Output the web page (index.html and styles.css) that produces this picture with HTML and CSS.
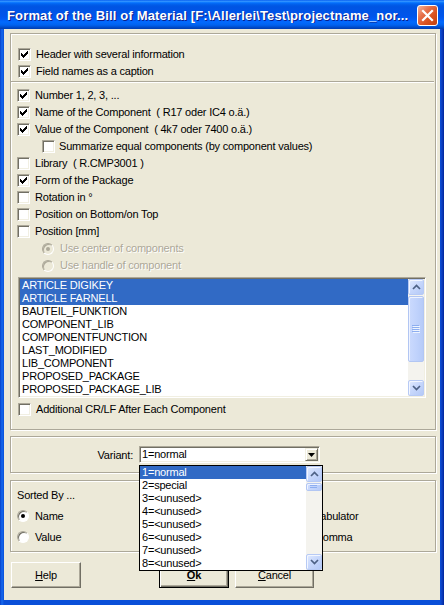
FILE: index.html
```html
<!DOCTYPE html>
<html>
<head>
<meta charset="utf-8">
<title>Format of the Bill of Material</title>
<link rel="stylesheet" href="styles.css">
</head>
<body>
<div class="window">
  <div class="titlebar">
    <span class="title">Format of the Bill of Material [F:\Allerlei\Test\projectname_nor...</span>
    <span class="close"><svg width="19" height="19" viewBox="0 0 19 19"><path d="M5 5 L14 14 M14 5 L5 14" stroke="#fff" stroke-width="2.2" stroke-linecap="square"/></svg></span>
  </div>
  <div class="client">
    <div class="group g1">
      <div class="sec-head">
        <div class="row"><span class="cb"><svg class="chk" width="11" height="11" viewBox="0 0 11 11"><path d="M2 4h1v3H2z M3 5h1v3H3z M4 6h1v3H4z M5 5h1v3H5z M6 4h1v3H6z M7 3h1v3H7z M8 2h1v3H8z"/></svg></span><span class="lbl">Header with several information</span></div>
        <div class="row"><span class="cb"><svg class="chk" width="11" height="11" viewBox="0 0 11 11"><path d="M2 4h1v3H2z M3 5h1v3H3z M4 6h1v3H4z M5 5h1v3H5z M6 4h1v3H6z M7 3h1v3H7z M8 2h1v3H8z"/></svg></span><span class="lbl">Field names as a caption</span></div>
      </div>
      <div class="sep"></div>
      <div class="sec-main">
        <div class="row"><span class="cb"><svg class="chk" width="11" height="11" viewBox="0 0 11 11"><path d="M2 4h1v3H2z M3 5h1v3H3z M4 6h1v3H4z M5 5h1v3H5z M6 4h1v3H6z M7 3h1v3H7z M8 2h1v3H8z"/></svg></span><span class="lbl">Number 1, 2, 3, ...</span></div>
        <div class="row"><span class="cb"><svg class="chk" width="11" height="11" viewBox="0 0 11 11"><path d="M2 4h1v3H2z M3 5h1v3H3z M4 6h1v3H4z M5 5h1v3H5z M6 4h1v3H6z M7 3h1v3H7z M8 2h1v3H8z"/></svg></span><span class="lbl">Name of the Component&nbsp; ( R17 oder IC4 o.ä.)</span></div>
        <div class="row"><span class="cb"><svg class="chk" width="11" height="11" viewBox="0 0 11 11"><path d="M2 4h1v3H2z M3 5h1v3H3z M4 6h1v3H4z M5 5h1v3H5z M6 4h1v3H6z M7 3h1v3H7z M8 2h1v3H8z"/></svg></span><span class="lbl">Value of the Component&nbsp; ( 4k7 oder 7400 o.ä.)</span></div>
        <div class="row sub"><span class="cb"></span><span class="lbl">Summarize equal components (by component values)</span></div>
        <div class="row"><span class="cb"></span><span class="lbl">Library&nbsp; ( R.CMP3001 )</span></div>
        <div class="row"><span class="cb"><svg class="chk" width="11" height="11" viewBox="0 0 11 11"><path d="M2 4h1v3H2z M3 5h1v3H3z M4 6h1v3H4z M5 5h1v3H5z M6 4h1v3H6z M7 3h1v3H7z M8 2h1v3H8z"/></svg></span><span class="lbl">Form of the Package</span></div>
        <div class="row"><span class="cb"></span><span class="lbl">Rotation in °</span></div>
        <div class="row"><span class="cb"></span><span class="lbl">Position on Bottom/on Top</span></div>
        <div class="row"><span class="cb"></span><span class="lbl">Position [mm]</span></div>
        <div class="row sub rrow"><span class="rb dis on"></span><span class="lbl distext">Use center of components</span></div>
        <div class="row sub rrow"><span class="rb dis"></span><span class="lbl distext">Use handle of component</span></div>
        <div class="listbox">
          <div class="items">
            <div class="li sel">ARTICLE DIGIKEY</div>
            <div class="li sel">ARTICLE FARNELL</div>
            <div class="li">BAUTEIL_FUNKTION</div>
            <div class="li">COMPONENT_LIB</div>
            <div class="li">COMPONENTFUNCTION</div>
            <div class="li">LAST_MODIFIED</div>
            <div class="li">LIB_COMPONENT</div>
            <div class="li">PROPOSED_PACKAGE</div>
            <div class="li">PROPOSED_PACKAGE_LIB</div>
          </div>
          <div class="vscroll">
            <div class="sbtn"><svg width="9" height="6" viewBox="0 0 9 6"><path d="M1 5 L4.5 1.5 L8 5" fill="none" stroke="#4D6185" stroke-width="1.7"/></svg></div>
            <div class="thumb big"><svg width="8" height="8" viewBox="0 0 8 8"><path d="M0 0.5h7M0 2.5h7M0 4.5h7M0 6.5h7" stroke="#8DAEF0" stroke-width="1"/><path d="M1 1.5h7M1 3.5h7M1 5.5h7M1 7.5h7" stroke="#EEF4FE" stroke-width="1"/></svg></div>
            <div class="track"></div>
            <div class="sbtn"><svg width="9" height="6" viewBox="0 0 9 6"><path d="M1 1 L4.5 4.5 L8 1" fill="none" stroke="#4D6185" stroke-width="1.7"/></svg></div>
          </div>
        </div>
        <div class="row crlf"><span class="cb"></span><span class="lbl">Additional CR/LF After Each Component</span></div>
      </div>
    </div>

    <div class="group g2">
      <span class="vlabel">Variant:</span>
      <div class="combo">
        <span class="ctext">1=normal</span>
        <span class="cbtn"><svg width="7" height="4" viewBox="0 0 7 4"><path d="M0 0h7L3.5 4z" fill="#000"/></svg></span>
      </div>
    </div>

    <div class="group g3">
      <div class="col">
        <div class="srow">Sorted By ...</div>
        <div class="srow"><span class="rb on"></span><span>Name</span></div>
        <div class="srow"><span class="rb"></span><span>Value</span></div>
      </div>
      <div class="col">
        <div class="srow"></div>
        <div class="srow"><span class="rb on"></span><span>Tabulator</span></div>
        <div class="srow"><span class="rb"></span><span>Comma</span></div>
      </div>
    </div>

    <div class="buttons">
      <div class="btn help"><span><u>H</u>elp</span></div>
      <div class="btn ok"><span><u>O</u>k</span></div>
      <div class="btn cancel"><span><u>C</u>ancel</span></div>
    </div>
  </div>

  <div class="dropdown">
    <div class="items">
      <div class="li sel">1=normal</div>
      <div class="li">2=special</div>
      <div class="li">3=&lt;unused&gt;</div>
      <div class="li">4=&lt;unused&gt;</div>
      <div class="li">5=&lt;unused&gt;</div>
      <div class="li">6=&lt;unused&gt;</div>
      <div class="li">7=&lt;unused&gt;</div>
      <div class="li">8=&lt;unused&gt;</div>
    </div>
    <div class="vscroll">
      <div class="sbtn"><svg width="9" height="6" viewBox="0 0 9 6"><path d="M1 5 L4.5 1.5 L8 5" fill="none" stroke="#4D6185" stroke-width="1.7"/></svg></div>
      <div class="thumb small"><svg width="8" height="4" viewBox="0 0 8 4"><path d="M0 0.5h7M0 2.5h7" stroke="#8DAEF0" stroke-width="1"/></svg></div>
      <div class="track"></div>
      <div class="sbtn"><svg width="9" height="6" viewBox="0 0 9 6"><path d="M1 1 L4.5 4.5 L8 1" fill="none" stroke="#4D6185" stroke-width="1.7"/></svg></div>
    </div>
  </div>
</div>
</body>
</html>
```

FILE: styles.css
```css
* { box-sizing: border-box; }
html, body { margin: 0; padding: 0; }
body {
  width: 444px;
  height: 605px;
  overflow: hidden;
  font-family: "Liberation Sans", Arial, sans-serif;
  font-size: 11px;
  letter-spacing: -0.2px;
  color: #000;
  background: #fff;
}

.window {
  position: relative;
  width: 444px;
  height: 605px;
  display: flex;
  flex-direction: column;
  background: linear-gradient(to right, #0841C9 0px, #166AEE 2px, #0A4FD8 4px, #0A4FD8 440px, #0C3EC0 442px, #00259A 444px);
}

.titlebar {
  height: 29px;
  flex: none;
  display: flex;
  align-items: flex-start;
  padding: 0 6px 0 7px;
  background: linear-gradient(to bottom, #0058EE 0%, #3593FF 4%, #288EFF 6%, #127DFF 8%, #036FFC 10%, #0262EE 14%, #0057E5 20%, #0054E3 24%, #0055EB 56%, #005BF5 66%, #026AFE 76%, #0062EF 86%, #0052D6 92%, #0046C0 96%, #003DB0 100%);
}

.title {
  flex: 1;
  color: #fff;
  font-weight: bold;
  font-size: 13px;
  line-height: 15px;
  margin-top: 8px;
  letter-spacing: 0.15px;
  white-space: nowrap;
  overflow: hidden;
  text-shadow: 1px 1px 0 #0A1E8A;
}

.close {
  flex: none;
  width: 21px;
  height: 21px;
  margin-top: 5px;
  border: 1px solid #fff;
  border-radius: 3px;
  background: linear-gradient(135deg, #F5B49A 0%, #E6704A 35%, #D9521F 65%, #C0400F 100%);
  display: flex;
}

.client {
  flex: 1;
  margin: 0 4px 5px 4px;
  background: #ECE9D8;
  padding: 4px 4px 0 6px;
  display: flex;
  flex-direction: column;
}

.group {
  border: 1px solid #ACA899;
  box-shadow: inset 1px 1px 0 #fff, 1px 1px 0 #fff;
  flex: none;
}

.g1 {
  height: 397px;
  padding-top: 12px;
}

.sec-head { padding-left: 7px; }
.sec-main { padding-left: 6px; margin-top: 4px; }

.sep {
  margin: 1px 1px 0 0;
  height: 2px;
  border-top: 1px solid #ACA899;
  border-bottom: 1px solid #fff;
}

.row {
  height: 17px;
  display: flex;
  align-items: center;
  gap: 5px;
  white-space: nowrap;
}
.lbl { margin-top: -2px; }
.row.sub { padding-left: 25px; gap: 4px; }
.row.rrow { gap: 6px; }
.row.crlf { margin-top: 3px; padding-left: 1px; }

.cb {
  flex: none;
  width: 13px;
  height: 13px;
  background: #fff;
  border: 1px solid;
  border-color: #ACA899 #fff #fff #ACA899;
  box-shadow: inset 1px 1px 0 #716F64, inset -1px -1px 0 #F1EFE2;
  display: block;
}
.chk { display: block; fill: #000; }

.rb {
  flex: none;
  position: relative;
  width: 12px;
  height: 12px;
  border-radius: 50%;
  background: #fff;
  border: 1px solid;
  border-color: #ACA899 #fff #fff #ACA899;
  box-shadow: inset 1px 1px 0 #716F64;
}
.rb.on::after {
  content: "";
  position: absolute;
  left: 3px;
  top: 3px;
  width: 4px;
  height: 4px;
  border-radius: 50%;
  background: #000;
}
.rb.dis { background: #ECE9D8; box-shadow: inset 1px 1px 0 #ACA899; }
.rb.dis.on::after { background: #ACA899; }
.distext { color: #ACA899; text-shadow: 1px 1px 0 #fff; }

.listbox {
  margin: 3px 0 0 1px;
  width: 408px;
  height: 121px;
  background: #fff;
  border: 1px solid;
  border-color: #ACA899 #fff #fff #ACA899;
  box-shadow: inset 1px 1px 0 #716F64, inset -1px -1px 0 #F1EFE2;
  padding: 1px;
  display: flex;
}

.items { flex: 1; overflow: hidden; }
.li {
  height: 13px;
  line-height: 13px;
  padding-left: 2px;
  white-space: nowrap;
}
.li.sel { background: #316AC5; color: #fff; }

.vscroll {
  flex: none;
  width: 16px;
  display: flex;
  flex-direction: column;
  background: #F4F3EE;
}
.sbtn {
  flex: none;
  height: 16px;
  border: 1px solid #B7CAF5;
  border-radius: 2px;
  background: linear-gradient(135deg, #E1EAFE 0%, #C8D8FC 45%, #B4C9F7 100%);
  box-shadow: inset 1px 1px 0 #F2F6FF;
  display: flex;
  align-items: center;
  justify-content: center;
}
.thumb {
  flex: none;
  margin-top: 1px;
  border: 1px solid #B2C6F3;
  border-radius: 2px;
  background: linear-gradient(to right, #CBDAFD 0%, #C1D3FC 50%, #B6CBF8 100%);
  box-shadow: inset 1px 1px 0 #EEF3FF;
  display: flex;
  align-items: center;
  justify-content: center;
}
.thumb.big { height: 66px; }
.thumb.small { height: 8px; }
.track { flex: 1; }

.g2 {
  margin-top: 6px;
  height: 37px;
  display: flex;
  align-items: center;
}
.vlabel {
  width: 122px;
  text-align: right;
  margin-right: 6px;
  flex: none;
}
.combo {
  flex: none;
  width: 181px;
  height: 17px;
  background: #fff;
  border: 1px solid;
  border-color: #ACA899 #fff #fff #ACA899;
  box-shadow: inset 1px 1px 0 #716F64, inset -1px -1px 0 #F1EFE2;
  padding: 1px;
  display: flex;
  align-items: center;
}
.ctext { flex: 1; padding-left: 1px; line-height: 13px; }
.cbtn {
  flex: none;
  width: 13px;
  height: 13px;
  background: #ECE9D8;
  border: 1px solid;
  border-color: #F1EFE2 #716F64 #716F64 #F1EFE2;
  box-shadow: inset 1px 1px 0 #fff, inset -1px -1px 0 #ACA899;
  display: flex;
  align-items: center;
  justify-content: center;
}

.g3 {
  margin-top: 7px;
  height: 72px;
  padding: 3px 0 0 6px;
  display: flex;
}
.g3 .col:first-child { width: 280px; }
.srow {
  height: 21px;
  display: flex;
  align-items: center;
  gap: 6px;
  white-space: nowrap;
}

.buttons {
  margin-top: 10px;
  height: 26px;
  display: flex;
  flex: none;
}
.btn {
  height: 26px;
  background: #ECE9D8;
  border: 1px solid;
  border-color: #fff #716F64 #716F64 #fff;
  box-shadow: inset -1px -1px 0 #ACA899;
  display: flex;
  align-items: center;
  justify-content: center;
}
.help { width: 70px; margin-left: 1px; }
.ok {
  width: 70px;
  margin-left: 78px;
  font-weight: bold;
  border: 1px solid #000;
  box-shadow: inset 1px 1px 0 #fff, inset -1px -1px 0 #716F64, inset -2px -2px 0 #ACA899;
}
.cancel { width: 79px; margin-left: 6px; }

.dropdown {
  position: absolute;
  left: 139px;
  top: 465px;
  width: 184px;
  height: 106px;
  border: 1px solid #000;
  background: #fff;
  display: flex;
}
.dropdown .li { padding-left: 2px; }
```
